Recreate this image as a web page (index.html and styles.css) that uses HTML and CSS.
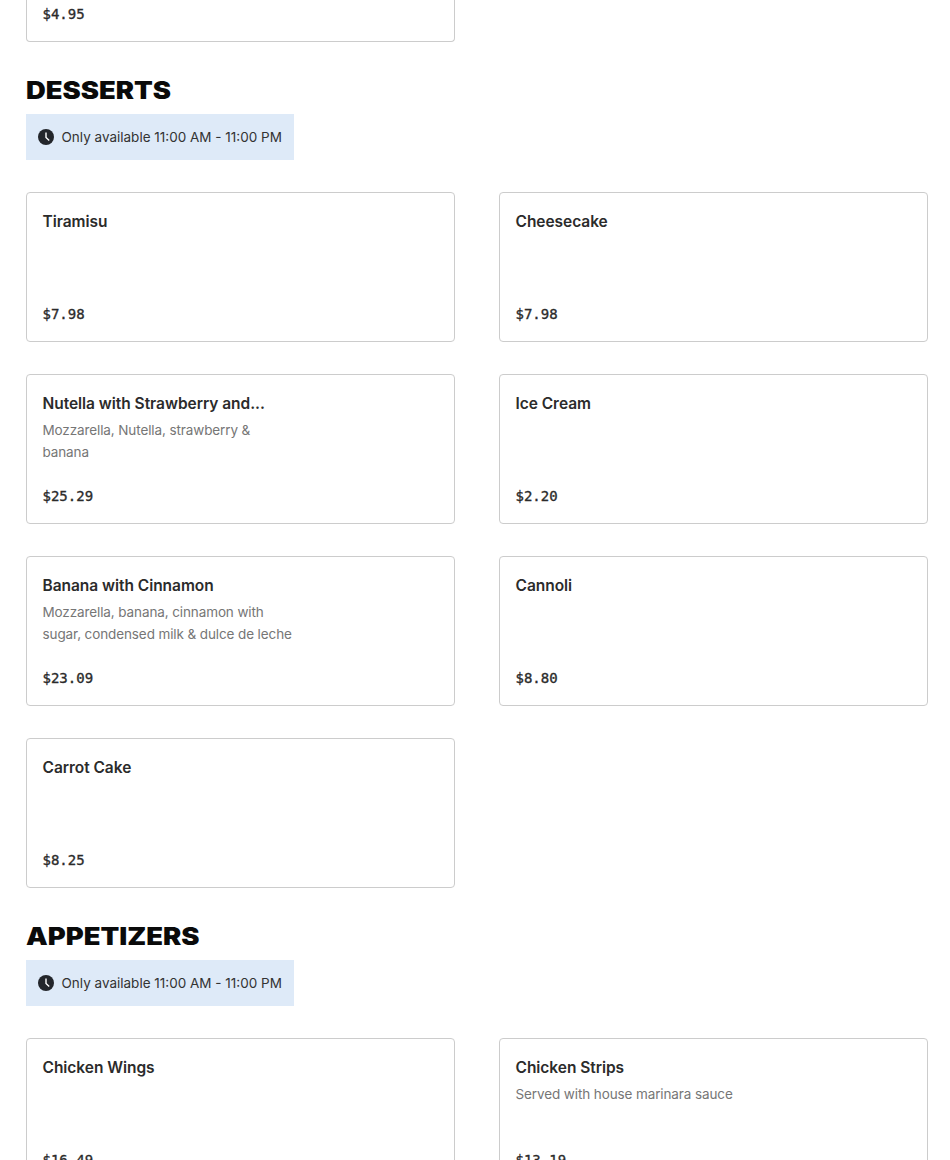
FILE: index.html
```html
<!DOCTYPE html>
<html lang="en">
<head>
<meta charset="utf-8">
<title>Menu</title>
<link rel="stylesheet" href="styles.css">
</head>
<body>
<main class="menu">
  <div class="grid">
    <article class="card card-cut"><p class="price">$4.95</p></article>
  </div>

  <section class="section">
    <h2 class="heading">DESSERTS</h2>
    <div class="notice">
      <svg class="clock" viewBox="0 0 16 16" aria-hidden="true"><circle cx="8" cy="8" r="8"/><path d="M8 3.5V8.4L11.2 11.4"/></svg>
      <span>Only available 11:00 AM - 11:00 PM</span>
    </div>
    <div class="grid">
      <article class="card"><h3 class="name">Tiramisu</h3><p class="price">$7.98</p></article>
      <article class="card"><h3 class="name">Cheesecake</h3><p class="price">$7.98</p></article>
      <article class="card"><h3 class="name">Nutella with Strawberry and...</h3><p class="desc">Mozzarella, Nutella, strawberry &amp; banana</p><p class="price">$25.29</p></article>
      <article class="card"><h3 class="name">Ice Cream</h3><p class="price">$2.20</p></article>
      <article class="card"><h3 class="name">Banana with Cinnamon</h3><p class="desc">Mozzarella, banana, cinnamon with sugar, condensed milk &amp; dulce de leche</p><p class="price">$23.09</p></article>
      <article class="card"><h3 class="name">Cannoli</h3><p class="price">$8.80</p></article>
      <article class="card"><h3 class="name">Carrot Cake</h3><p class="price">$8.25</p></article>
    </div>
  </section>

  <section class="section">
    <h2 class="heading">APPETIZERS</h2>
    <div class="notice">
      <svg class="clock" viewBox="0 0 16 16" aria-hidden="true"><circle cx="8" cy="8" r="8"/><path d="M8 3.5V8.4L11.2 11.4"/></svg>
      <span>Only available 11:00 AM - 11:00 PM</span>
    </div>
    <div class="grid">
      <article class="card"><h3 class="name">Chicken Wings</h3><p class="price">$16.49</p></article>
      <article class="card"><h3 class="name">Chicken Strips</h3><p class="desc">Served with house marinara sauce</p><p class="price">$13.19</p></article>
    </div>
  </section>
</main>
</body>
</html>
```
FILE: styles.css
```css
* { box-sizing: border-box; }
html, body { margin: 0; height: 1160px; overflow: hidden; background: #fff; }
body { font-family: Inter, "Liberation Sans", sans-serif; color: #2b2b2b; }
.menu { padding: 0 22px 0 26px; }
.grid { display: grid; grid-template-columns: 429px 429px; column-gap: 44px; row-gap: 32px; }
.section { margin-top: 32px; }
.heading {
  width: 160px; margin: 0; height: 40px; padding-top: 1px; font-size: 24px; line-height: 32px;
  font-weight: 900; white-space: nowrap; color: #0a0a0a; font-family: Inter, sans-serif;
  transform: scaleX(1.14); transform-origin: left center;
}
.notice {
  display: flex; align-items: center; gap: 7.5px; width: 268px; height: 46px;
  padding-left: 12px; margin-bottom: 32px; background: #deeaf8; font-size: 13.5px; color: #333;
}
.clock { width: 16px; height: 16px; flex: none; }
.clock circle { fill: #23262b; }
.clock path { fill: none; stroke: #fff; stroke-width: 1.4; }
.card {
  display: flex; flex-direction: column; height: 150px; padding: 16px 16px 17px 15.5px;
  border: 1px solid #ccc; border-radius: 4px; background: #fff;
}
.card-cut { height: 42px; padding-top: 0; border-top: 0; border-radius: 0 0 4px 4px; }
.name { margin: 0; padding-top: 1px; height: 24px; font-size: 15.5px; line-height: 24px; font-weight: 600; letter-spacing: -0.04px; color: #2b2b2b; }
.desc { margin: 4px 0 0; width: 256px; font-size: 13.5px; line-height: 22px; letter-spacing: -0.11px; color: #767676; }
.price {
  margin: auto 0 0; font-family: "DejaVu Sans Mono", "Liberation Mono", monospace;
  font-size: 14px; line-height: 20px; font-weight: 400; -webkit-text-stroke: 0.35px #2b2b2b; color: #2b2b2b;
}
```
